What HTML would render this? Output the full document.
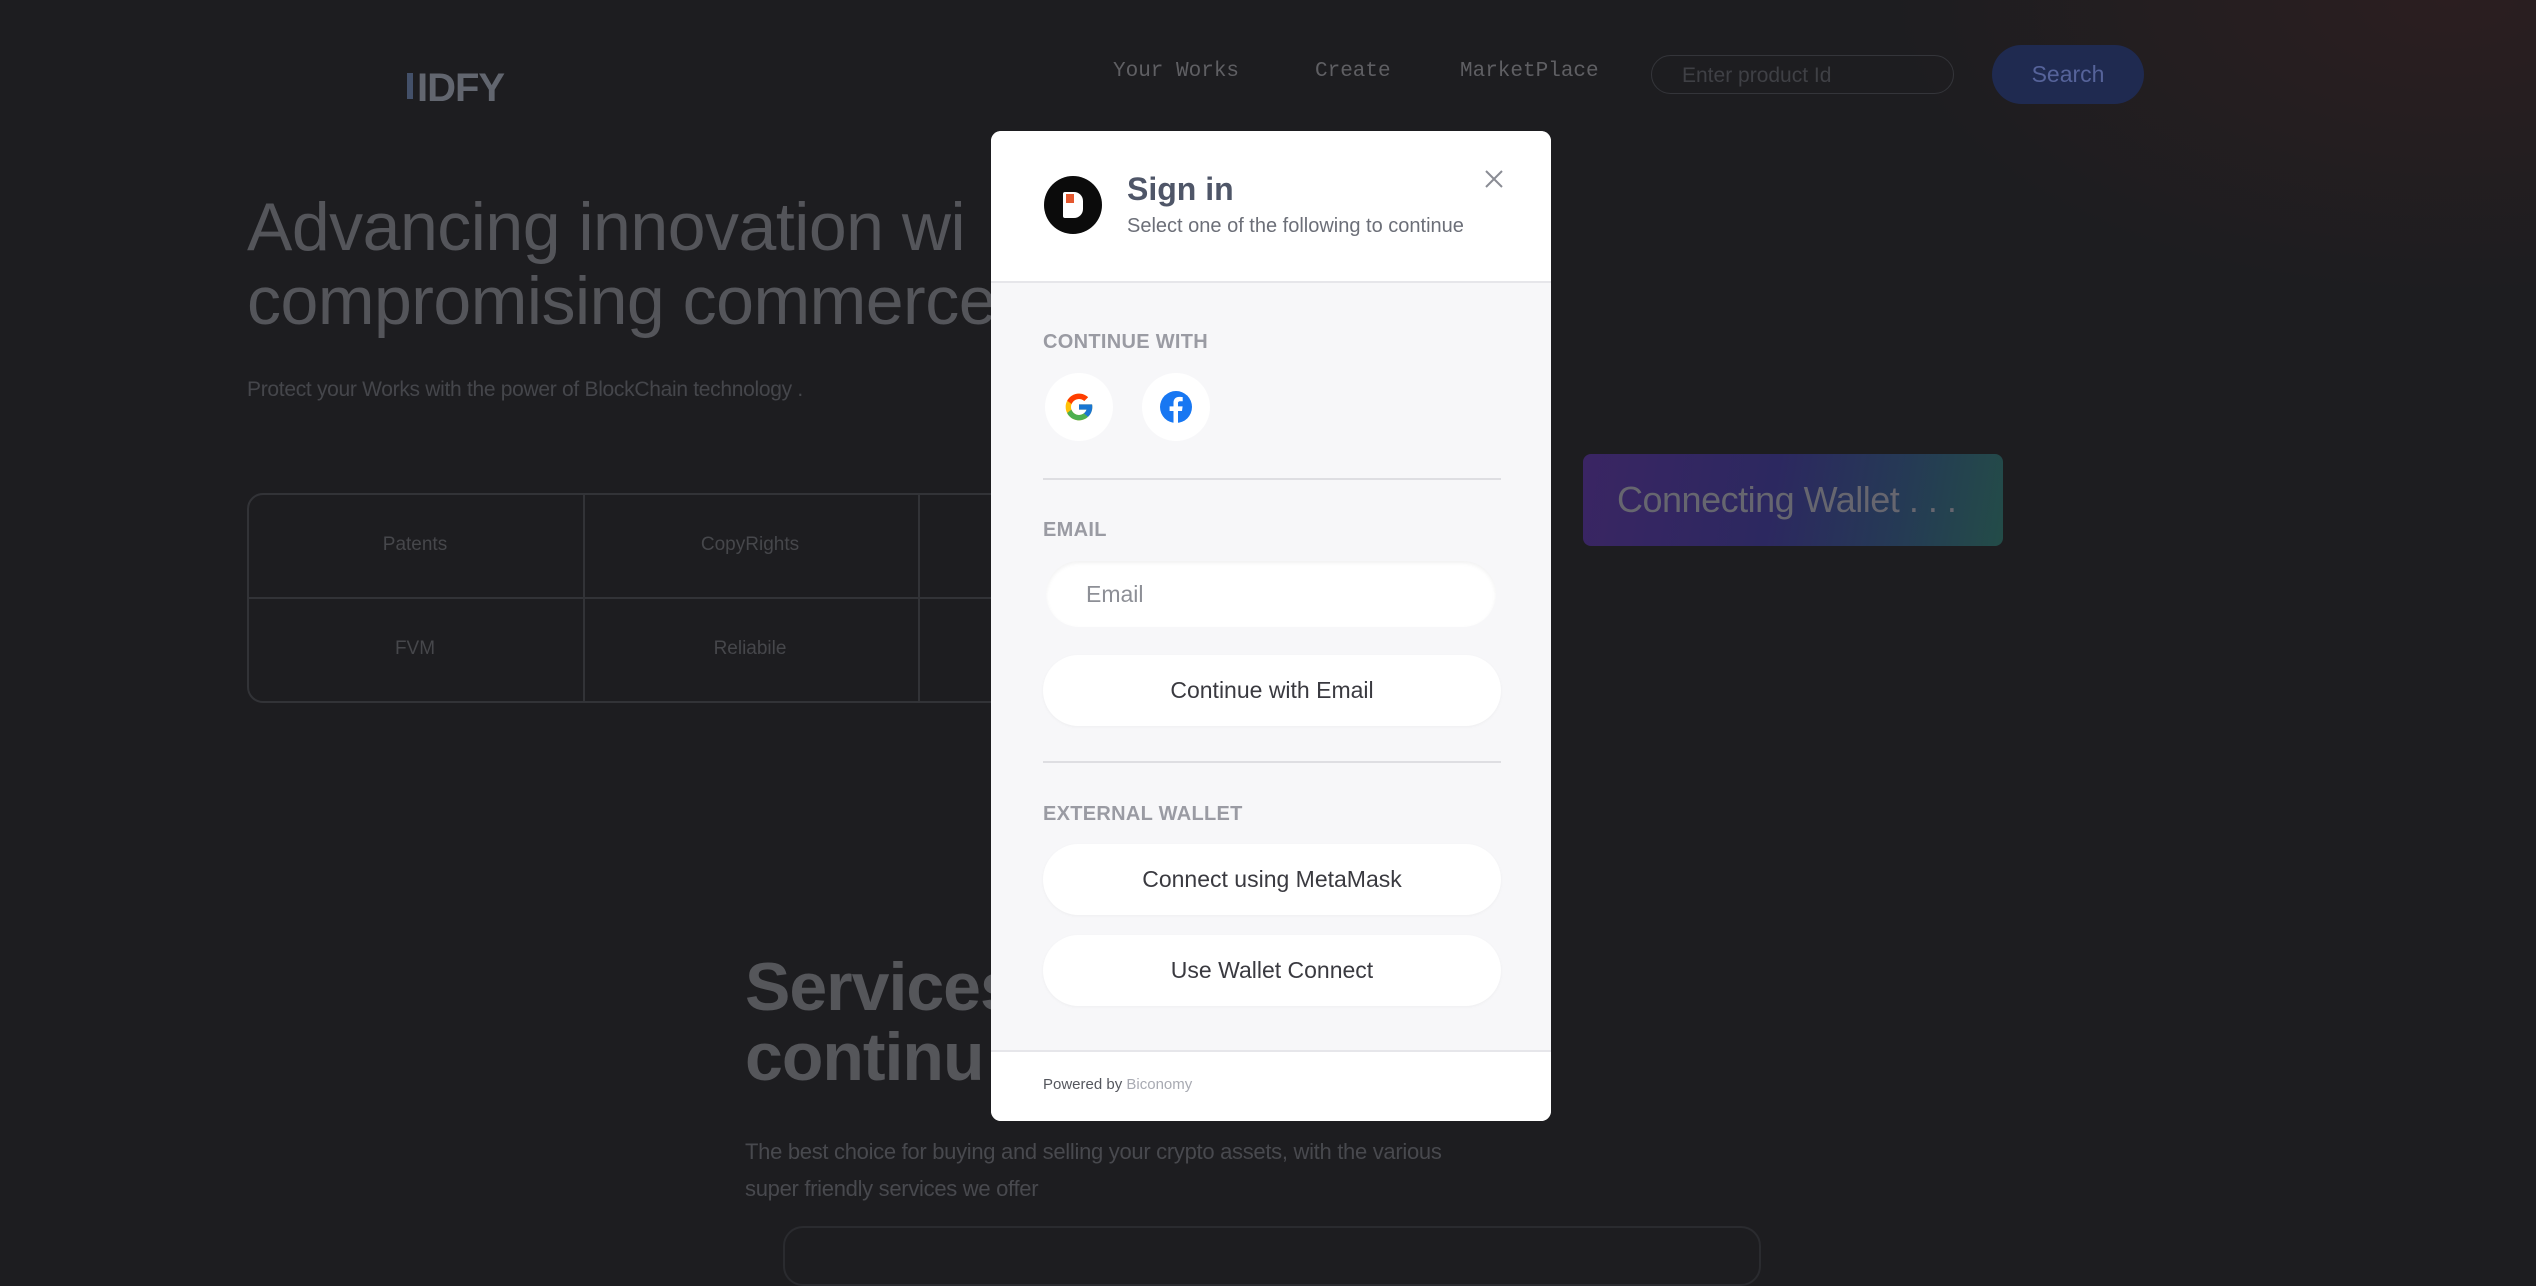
<!DOCTYPE html>
<html><head><meta charset="utf-8"><style>
*{margin:0;padding:0;box-sizing:border-box}
body{width:2536px;height:1254px;overflow:hidden;background:#1d1d20;font-family:"Liberation Sans",sans-serif;position:relative}
.bg{position:absolute;inset:0;background:radial-gradient(ellipse 800px 420px at 2450px 0px,rgba(60,32,32,0.45),rgba(0,0,0,0) 70%)}
.a{position:absolute;white-space:nowrap}
.nav{font-family:"Liberation Mono",monospace;font-size:21px;color:#5f5f63;top:60px}
.cell{position:absolute;font-size:19px;color:#46474b;text-align:center}
.modal{position:absolute;left:991px;top:131px;width:560px;height:990px;background:#f7f7f9;border-radius:10px;overflow:hidden}
.lbl{position:absolute;left:52px;font-size:20px;font-weight:bold;color:#9a9ba3;letter-spacing:0.3px}
.btn{position:absolute;left:52px;width:458px;height:71px;background:#fff;border-radius:36px;font-size:23px;color:#3a3a40;text-align:center;line-height:71px;box-shadow:0 1px 3px rgba(0,0,0,0.04)}
.hr{position:absolute;left:52px;width:458px;height:2px;background:#dedee2}
</style></head><body>
<div class="bg"></div>
<div class="a" style="left:407px;top:66px;font-size:40px;font-weight:bold;color:#62666f;letter-spacing:-1px"><span style="display:inline-block;width:6px;height:26px;background:#435069;margin-right:4px;vertical-align:2px"></span>IDFY</div>
<div class="a nav" style="left:1113px">Your Works</div>
<div class="a nav" style="left:1315px">Create</div>
<div class="a nav" style="left:1460px">MarketPlace</div>
<div class="a" style="left:1651px;top:55px;width:303px;height:39px;border:1.5px solid #34353a;border-radius:20px;color:#3f4045;font-size:21px;padding:8px 0 0 30px">Enter product Id</div>
<div class="a" style="left:1992px;top:45px;width:152px;height:59px;background:#1f2a50;border-radius:30px;color:#56639a;font-size:23px;text-align:center;line-height:59px">Search</div>
<div class="a" style="left:247px;top:190px;font-size:68px;font-weight:300;color:#54555a;line-height:74px;letter-spacing:-0.5px">Advancing innovation wi<br>compromising commerce</div>
<div class="a" style="left:247px;top:378px;font-size:21px;color:#45464b;letter-spacing:-0.3px">Protect your Works with the power of BlockChain technology .</div>
<div class="a" style="left:247px;top:493px;width:800px;height:210px;border:2px solid #323337;border-radius:16px"></div>
<div class="a" style="left:247px;top:597px;width:800px;height:2px;background:#323337"></div>
<div class="a" style="left:583px;top:493px;width:2px;height:210px;background:#323337"></div>
<div class="a" style="left:918px;top:493px;width:2px;height:210px;background:#323337"></div>
<div class="cell" style="left:330px;width:170px;top:534px">Patents</div>
<div class="cell" style="left:665px;width:170px;top:534px">CopyRights</div>
<div class="cell" style="left:330px;width:170px;top:638px">FVM</div>
<div class="cell" style="left:665px;width:170px;top:638px">Reliabile</div>
<div class="a" style="left:1583px;top:454px;width:420px;height:92px;border-radius:8px;background:linear-gradient(100deg,#3a2563 0%,#2c2860 45%,#253a55 75%,#234c48 100%);color:#66666f;font-size:36px;line-height:92px;padding-left:34px;letter-spacing:-0.5px">Connecting Wallet . . .</div>
<div class="a" style="left:745px;top:952px;font-size:68px;font-weight:bold;color:#55565a;line-height:70px;letter-spacing:-1px">Services<br>continu</div>
<div class="a" style="left:745px;top:1133px;font-size:22px;color:#48494e;line-height:37px;letter-spacing:-0.3px">The best choice for buying and selling your crypto assets, with the various<br>super friendly services we offer</div>
<div class="a" style="left:783px;top:1226px;width:978px;height:60px;border:2px solid #2a2b2f;border-radius:20px"></div>

<div class="modal">
 <div style="position:absolute;left:0;top:0;width:560px;height:152px;background:#fff;border-bottom:2px solid #e6e6ea"></div>
 <div style="position:absolute;left:53px;top:45px;width:58px;height:58px;border-radius:50%;background:#0b0b0b"></div>
 <div style="position:absolute;left:72px;top:61px;width:20px;height:26px;background:#fff;border-radius:2px 9px 9px 2px"></div>
 <div style="position:absolute;left:75px;top:63px;width:8px;height:9px;background:#e4572e"></div>
 <div class="a" style="left:136px;top:40px;font-size:32px;font-weight:bold;color:#4f5668">Sign in</div>
 <div class="a" style="left:136px;top:84px;font-size:20px;color:#6c6f78">Select one of the following to continue</div>
 <svg style="position:absolute;left:493px;top:38px" width="20" height="20" viewBox="0 0 20 20"><path d="M2 2L18 18M18 2L2 18" stroke="#8a8c94" stroke-width="2"/></svg>
 <div class="lbl" style="top:200px">CONTINUE WITH</div>
 <div style="position:absolute;left:54px;top:242px;width:68px;height:68px;border-radius:50%;background:#fff"></div>
 <svg style="position:absolute;left:72px;top:260px" width="32" height="32" viewBox="0 0 48 48"><path fill="#FFC107" d="M43.6 20.1H42V20H24v8h11.3C33.7 32.7 29.2 36 24 36c-6.6 0-12-5.4-12-12s5.4-12 12-12c3.1 0 5.8 1.2 7.9 3l5.7-5.700C34 6.1 29.3 4 24 4 13 4 4 13 4 24s9 20 20 20 20-9 20-20c0-1.3-.1-2.6-.4-3.9z"/><path fill="#FF3D00" d="M6.3 14.7l6.6 4.8C14.7 15.1 19 12 24 12c3.1 0 5.8 1.2 7.9 3l5.7-5.7C34 6.1 29.3 4 24 4 16.3 4 9.7 8.3 6.3 14.7z"/><path fill="#4CAF50" d="M24 44c5.2 0 9.9-2 13.4-5.2l-6.2-5.2C29.2 35.1 26.7 36 24 36c-5.2 0-9.6-3.3-11.3-8l-6.5 5C9.5 39.6 16.2 44 24 44z"/><path fill="#1976D2" d="M43.6 20.1H42V20H24v8h11.3c-.8 2.2-2.2 4.2-4.1 5.6l6.2 5.2C37 39.2 44 34 44 24c0-1.3-.1-2.6-.4-3.9z"/></svg>
 <div style="position:absolute;left:151px;top:242px;width:68px;height:68px;border-radius:50%;background:#fff"></div>
 <svg style="position:absolute;left:169px;top:260px" width="32" height="32" viewBox="0 0 32 32"><circle cx="16" cy="16" r="16" fill="#1877F2"/><path d="M18 32V20h4l.6-4.6H18v-3c0-1.3.4-2.2 2.3-2.2h2.4V6.1c-.4-.1-1.8-.2-3.5-.2-3.4 0-5.7 2.1-5.700 5.9v3.6H9.6V20h3.9v12z" fill="#fff"/></svg>
 <div class="hr" style="top:347px"></div>
 <div class="lbl" style="top:388px">EMAIL</div>
 <div style="position:absolute;left:55px;top:430px;width:450px;height:66px;background:#fff;border-radius:33px;box-shadow:inset 0 2px 4px rgba(0,0,0,0.06);font-size:23px;color:#8d8f96;line-height:66px;padding-left:40px">Email</div>
 <div class="btn" style="top:524px">Continue with Email</div>
 <div class="hr" style="top:630px"></div>
 <div class="lbl" style="top:672px">EXTERNAL WALLET</div>
 <div class="btn" style="top:713px">Connect using MetaMask</div>
 <div class="btn" style="top:804px">Use Wallet Connect</div>
 <div style="position:absolute;left:0;top:919px;width:560px;height:71px;background:#fff;border-top:2px solid #e6e6ea"></div>
 <div class="a" style="left:52px;top:945px;font-size:15px;color:#55575e">Powered by <span style="color:#a8aab2">Biconomy</span></div>
</div>
</body></html>
